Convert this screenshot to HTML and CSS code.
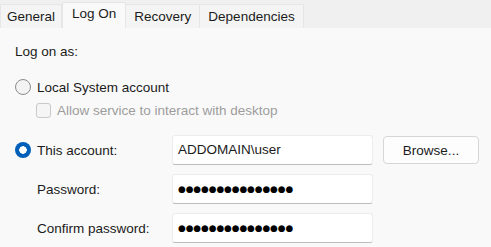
FILE: index.html
```html
<!DOCTYPE html>
<html lang="en">
<head>
    <meta charset="UTF-8">
    <title>Service Properties – Log On</title>
    <link rel="stylesheet" href="styles.css">
</head>
<body>
    <div class="dialog">
        <!-- Tabs -->
        <nav class="tabs">
            <a href="#" class="tab">General</a>
            <a href="#" class="tab selected">Log On</a>
            <a href="#" class="tab">Recovery</a>
            <a href="#" class="tab">Dependencies</a>
        </nav>

        <!-- Log On page -->
        <div class="page">
            <div class="heading">Log on as:</div>

            <label class="option">
                <span class="radio"></span>
                Local System account
            </label>
            <label class="option sub disabled">
                <span class="checkbox"></span>
                Allow service to interact with desktop
            </label>

            <div class="account">
                <label class="option">
                    <span class="radio checked"></span>
                    This account:
                </label>
                <div class="field">ADDOMAIN\user</div>
                <button class="browse">Browse...</button>

                <div class="field-label">Password:</div>
                <div class="field dots">●●●●●●●●●●●●●●●</div>
                <div></div>

                <div class="field-label">Confirm password:</div>
                <div class="field dots">●●●●●●●●●●●●●●●</div>
                <div></div>
            </div>
        </div>
    </div>
</body>
</html>
```

FILE: styles.css
```css
body {
    margin: 0;
    background: #f0f0f0;
    font-family: 'Liberation Sans', Arial, sans-serif;
    font-size: 13.5px;
    color: #1b1b1b;
}
.dialog {
    width: 491px;
    height: 247px;
    overflow: hidden;
}
.tabs {
    display: flex;
    align-items: flex-end;
    height: 28px;
}
.tab {
    height: 24px;
    line-height: 23px;
    padding: 0 8px;
    color: #1b1b1b;
    text-decoration: none;
    background: #f4f4f4;
    border: 1px solid #e6e6e6;
    border-bottom: none;
    box-sizing: border-box;
}
.tab:first-child {
    padding: 0 6px;
}
.tab + .tab {
    border-left: none;
}
.tab.selected {
    height: 26px;
    line-height: 22px;
    padding: 0 9px;
    background: #f9f9f9;
    border: 1px solid #e6e6e6;
    border-bottom: none;
    border-radius: 2px 2px 0 0;
}
.page {
    background: #f9f9f9;
    height: 219px;
    padding: 15px 12px 0 15px;
    box-sizing: border-box;
    display: flex;
    flex-direction: column;
}
.heading {
    line-height: 18px;
}
.option {
    display: flex;
    align-items: center;
    gap: 6px;
    height: 18px;
    margin-top: 17px;
}
.option.sub {
    margin-top: 5px;
    padding-left: 21px;
}
.disabled {
    color: #9d9d9d;
}
.radio {
    width: 16px;
    height: 16px;
    border-radius: 50%;
    border: 1px solid #8b8b8b;
    background: #f3f3f3;
    box-sizing: border-box;
    flex: none;
}
.radio.checked {
    border: none;
    background: radial-gradient(circle, #fff 0 3.5px, #005fb8 4px);
}
.checkbox {
    width: 15px;
    height: 15px;
    border-radius: 3px;
    border: 1px solid #c9c9c9;
    background: #f5f5f5;
    box-sizing: border-box;
    flex: none;
}
.account {
    margin-top: 16px;
    display: grid;
    grid-template-columns: 147px 201px 96px;
    grid-auto-rows: 30px;
    column-gap: 10px;
    row-gap: 9px;
    align-items: center;
}
.account .option {
    margin-top: 0;
}
.field-label {
    padding-left: 22px;
}
.field {
    height: 30px;
    line-height: 28px;
    padding: 0 5px;
    background: #fff;
    border: 1px solid #ececec;
    border-bottom: 1px solid #bdbdbd;
    border-radius: 3px;
    box-sizing: border-box;
}
.dots {
    font-family: 'DejaVu Sans', sans-serif;
    font-size: 8.8px;
    color: #000;
}
.browse {
    height: 28px;
    align-self: start;
    margin-top: 1px;
    font: inherit;
    color: #1b1b1b;
    background: #fdfdfd;
    border: 1px solid #d6d6d6;
    border-radius: 4px;
}
```
